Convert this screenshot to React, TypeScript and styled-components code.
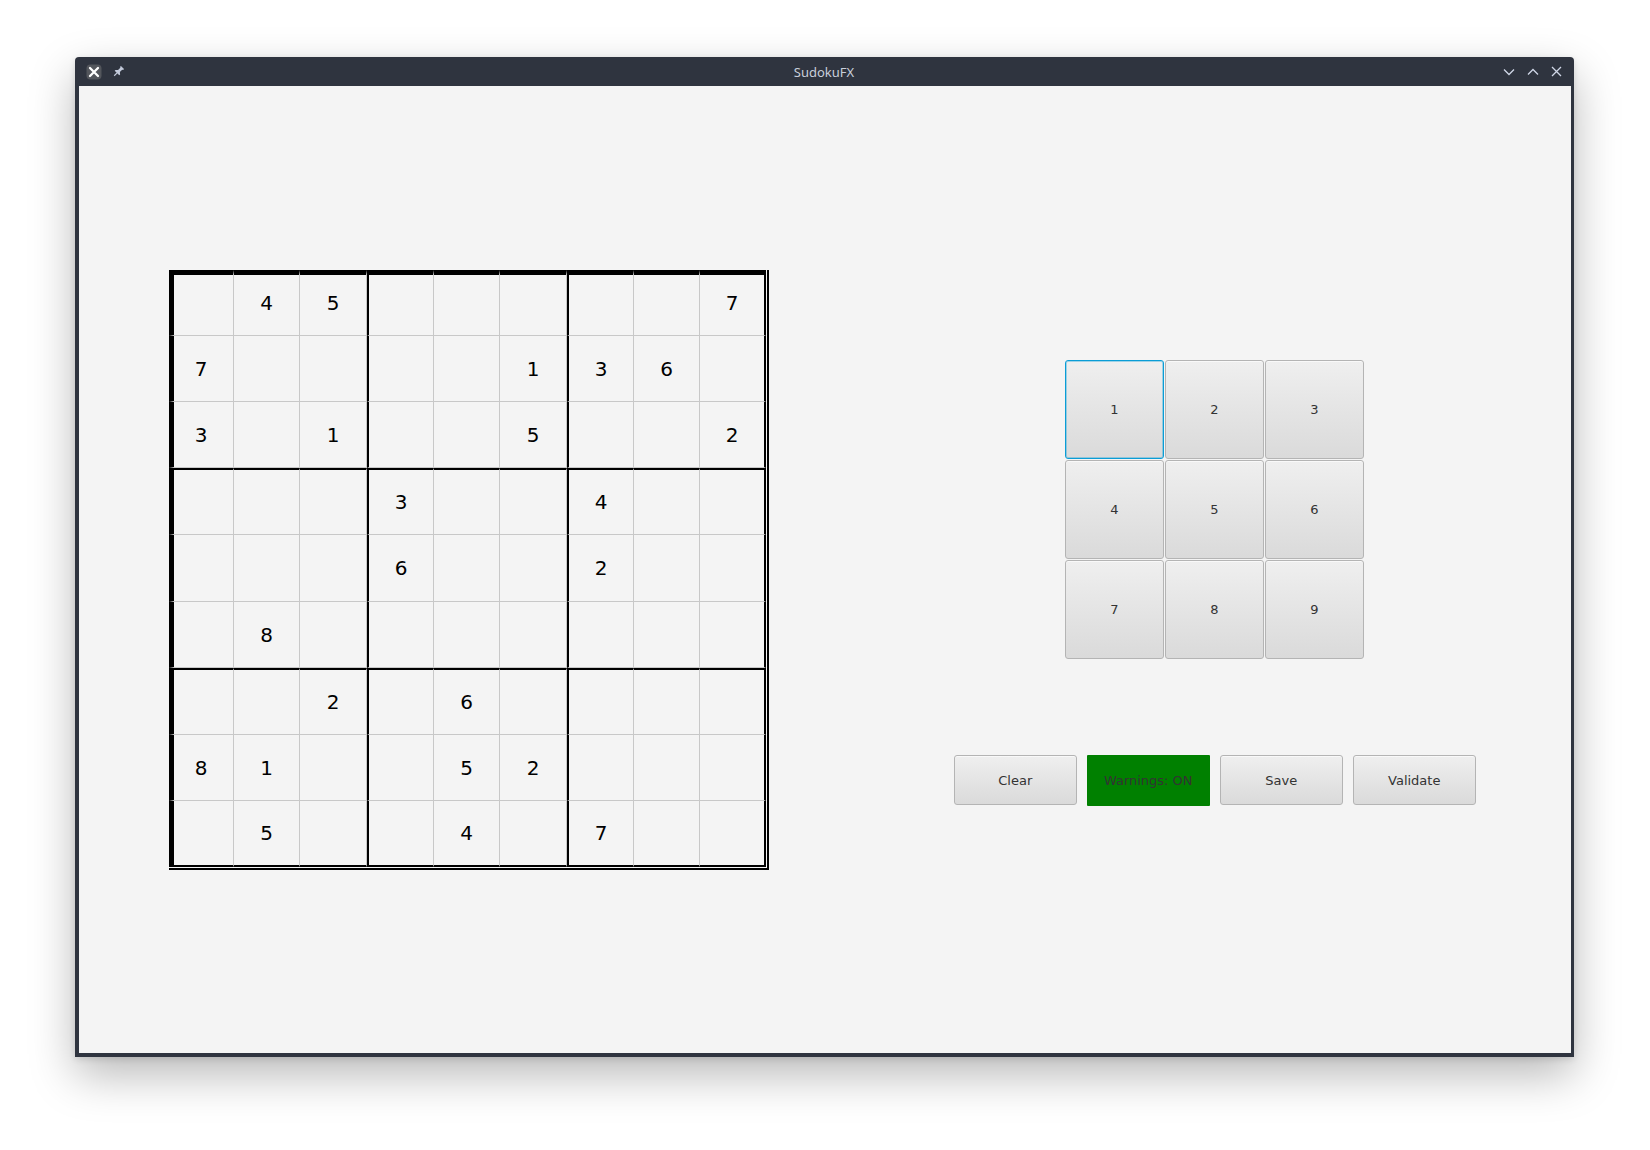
import styled, { createGlobalStyle } from 'styled-components';

const GlobalStyle = createGlobalStyle`
  * { box-sizing: border-box; }
  html, body {
    margin: 0;
    padding: 0;
    background: #ffffff;
    font-family: 'DejaVu Sans', 'Liberation Sans', sans-serif;
  }
`;

const frameColor = '#2f343f';
const thinLine = '#c8c8c8';

const PUZZLE = [
  '045000007',
  '700001360',
  '301005002',
  '000300400',
  '000600200',
  '080000000',
  '002060000',
  '810052000',
  '050040700',
];

// thick separators: outer edge 5px, box edges 2px
const leftEdge = (col: number) => (col === 0 ? 5 : col % 3 === 0 ? 2 : 0);
const topEdge = (row: number) => (row === 0 ? 5 : row % 3 === 0 ? 2 : 0);

const Desktop = styled.div`
  width: 1650px;
  height: 1150px;
  padding: 57px 0 0 75px;
  overflow: hidden;
`;

const Window = styled.div`
  width: 1499px;
  height: 1000px;
  display: flex;
  flex-direction: column;
  background: ${frameColor};
  border-radius: 4px 4px 0 0;
  box-shadow: 0 18px 46px rgba(0, 0, 0, 0.28), 0 2px 6px rgba(0, 0, 0, 0.12);
`;

const TitleBar = styled.div`
  height: 29px;
  display: grid;
  grid-template-columns: 1fr auto 1fr;
  align-items: center;
  padding: 0 12px 0 11px;
`;

const TitleLeft = styled.div`
  display: flex;
  align-items: center;
  gap: 10px;
`;

const TitleRight = styled.div`
  display: flex;
  align-items: center;
  justify-content: flex-end;
  gap: 12px;
`;

const Title = styled.div`
  font-family: 'Noto Sans', 'DejaVu Sans', sans-serif;
  font-size: 13px;
  color: #c9cfdb;
  padding-top: 1px;
`;

const Body = styled.div`
  flex: 1;
  margin: 0 3px 4px 4px;
  background: #f4f4f4;
  display: flex;
  align-items: flex-start;
  padding-left: 90px;
`;

const Board = styled.div`
  margin-top: 184px;
  display: grid;
  grid-template-columns: 65px 66px 67px 67px 66px 67px 67px 66px 66px;
  grid-template-rows: 66px 66px 66px 67px 67px 66px 67px 66px 66px;
  padding: 0 1px 1px 0;
  border-right: 2px solid #000;
  border-bottom: 2px solid #000;
`;

const Cell = styled.div<{ $row: number; $col: number }>`
  display: flex;
  align-items: center;
  justify-content: center;
  font-size: 20px;
  color: #000;
  padding-right: ${(p) => (p.$col === 0 ? 5 : 0)}px;
  padding-bottom: ${(p) => (p.$row === 0 ? 5 : 0)}px;
  border-left: ${(p) => (leftEdge(p.$col) ? `${leftEdge(p.$col)}px solid #000` : 'none')};
  border-top: ${(p) => (topEdge(p.$row) ? `${topEdge(p.$row)}px solid #000` : 'none')};
  border-right: ${(p) => (p.$col === 8 ? '2px solid #000' : `1px solid ${thinLine}`)};
  border-bottom: ${(p) => (p.$row === 8 ? '2px solid #000' : `1px solid ${thinLine}`)};
`;

const SidePanel = styled.div`
  margin-top: 274px;
  margin-left: 185px;
  display: flex;
  flex-direction: column;
  align-items: flex-start;
`;

const Keypad = styled.div`
  margin-left: 111px;
  display: grid;
  grid-template-columns: repeat(3, 99px);
  grid-auto-rows: 99px;
  gap: 1px;
`;

const KeyButton = styled.button<{ $focused?: boolean }>`
  font-family: 'DejaVu Sans', sans-serif;
  font-size: 13px;
  color: #333333;
  border: 1px solid ${(p) => (p.$focused ? '#0a9dd6' : '#b4b4b4')};
  border-radius: 3px;
  background: linear-gradient(to bottom, #efefef, #dadada);
  box-shadow: ${(p) =>
    p.$focused
      ? 'inset 0 0 0 1px rgba(10, 157, 214, 0.35)'
      : 'inset 0 1px 0 rgba(255, 255, 255, 0.6)'};
  padding: 0;
  cursor: pointer;
`;

const Actions = styled.div`
  margin-top: 96px;
  display: flex;
  align-items: flex-start;
  gap: 10.5px;
`;

const ActionButton = styled.button<{ $active?: boolean }>`
  width: 122.5px;
  height: ${(p) => (p.$active ? '51px' : '50px')};
  font-family: 'DejaVu Sans', sans-serif;
  font-size: 13px;
  color: #333333;
  padding: 0;
  cursor: pointer;
  border-radius: ${(p) => (p.$active ? '1px' : '3px')};
  border: ${(p) => (p.$active ? 'none' : '1px solid #b4b4b4')};
  background: ${(p) => (p.$active ? '#008000' : 'linear-gradient(to bottom, #efefef, #dadada)')};
  box-shadow: ${(p) => (p.$active ? 'none' : 'inset 0 1px 0 rgba(255, 255, 255, 0.6)')};
`;

const AppIcon = () => (
  <svg width="16" height="16" viewBox="0 0 16 16">
    <rect x="0.5" y="0.5" width="15" height="15" rx="4" fill="#53565c" />
    <path d="M4 4 L12 12 M12 4 L4 12" stroke="#ffffff" strokeWidth="2.3" strokeLinecap="round" />
  </svg>
);

const PinIcon = () => (
  <svg width="13" height="13" viewBox="0 0 12 12">
    <g transform="rotate(45 6 6)">
      <path
        d="M4 0.8h4v1.1l-0.8 0.5v3l1.8 1.5v1.1H3V6.9l1.8-1.5v-3L4 1.9z"
        fill="#c3cadb"
      />
      <path d="M6 7.8v3.8" stroke="#c3cadb" strokeWidth="1.1" />
    </g>
  </svg>
);

const ChevronDown = () => (
  <svg width="12" height="8" viewBox="0 0 12 8">
    <polyline points="1,1.5 6,6.5 11,1.5" fill="none" stroke="#cfd6e6" strokeWidth="1.3" />
  </svg>
);

const ChevronUp = () => (
  <svg width="12" height="8" viewBox="0 0 12 8">
    <polyline points="1,6.5 6,1.5 11,6.5" fill="none" stroke="#cfd6e6" strokeWidth="1.3" />
  </svg>
);

const CloseIcon = () => (
  <svg width="11" height="11" viewBox="0 0 11 11">
    <path d="M1 1 L10 10 M10 1 L1 10" stroke="#cfd6e6" strokeWidth="1.3" />
  </svg>
);

export default function App() {
  return (
    <>
      <GlobalStyle />
      <Desktop>
        <Window>
          <TitleBar>
            <TitleLeft>
              <AppIcon />
              <PinIcon />
            </TitleLeft>
            <Title>SudokuFX</Title>
            <TitleRight>
              <ChevronDown />
              <ChevronUp />
              <CloseIcon />
            </TitleRight>
          </TitleBar>

          <Body>
            <Board>
              {PUZZLE.map((line, row) =>
                line.split('').map((ch, col) => (
                  <Cell key={`${row}-${col}`} $row={row} $col={col}>
                    {ch !== '0' ? ch : ''}
                  </Cell>
                ))
              )}
            </Board>

            <SidePanel>
              <Keypad>
                {[1, 2, 3, 4, 5, 6, 7, 8, 9].map((n) => (
                  <KeyButton key={n} $focused={n === 1}>
                    {n}
                  </KeyButton>
                ))}
              </Keypad>

              <Actions>
                <ActionButton>Clear</ActionButton>
                <ActionButton $active>Warnings: ON</ActionButton>
                <ActionButton>Save</ActionButton>
                <ActionButton>Validate</ActionButton>
              </Actions>
            </SidePanel>
          </Body>
        </Window>
      </Desktop>
    </>
  );
}
